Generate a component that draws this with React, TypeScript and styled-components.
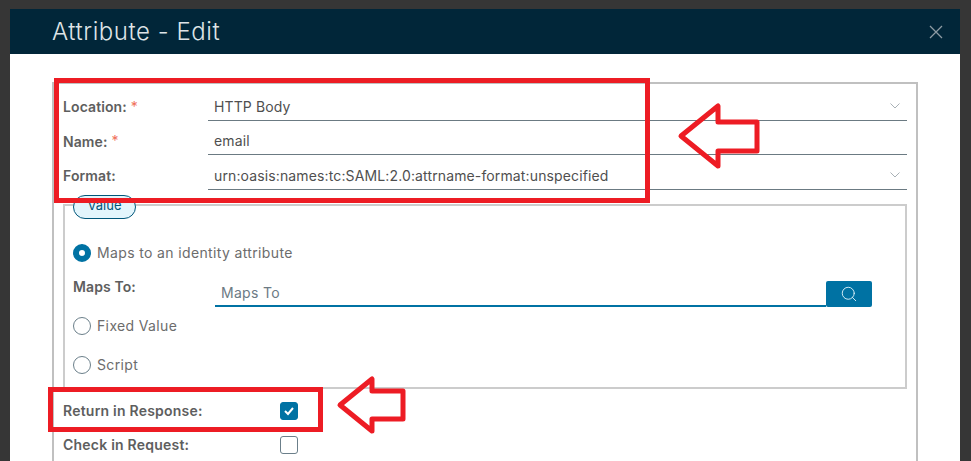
import { Search } from "lucide-react";
import styled, { createGlobalStyle } from "styled-components";

const GlobalStyle = createGlobalStyle`
  html, body {
    margin: 0;
    padding: 0;
    background: #363636;
  }
  * {
    box-sizing: border-box;
  }
`;

const Page = styled.div`
  position: relative;
  width: 971px;
  height: 461px;
  padding: 9px 11px 0 10px;
  overflow: hidden;
  background: #363636;
  font-family: "Inter", "Noto Sans", "Liberation Sans", sans-serif;
  font-size: 14px;
  color: #565656;
`;

const Modal = styled.div`
  height: 452px;
  background: #fff;
`;

const Header = styled.div`
  display: flex;
  align-items: center;
  justify-content: space-between;
  height: 45px;
  padding: 0 17px 0 42px;
  background: #012639;
`;

const Title = styled.div`
  font-size: 24px;
  font-weight: 300;
  letter-spacing: 0.55px;
  color: #dfe4e7;
`;

const Body = styled.div`
  padding: 28px 42px 0;
`;

const Fieldset = styled.div`
  height: 420px;
  padding: 2px 9px 0;
  border: 2px solid #c0c0c0;
`;

const Row = styled.div`
  display: flex;
  height: 34.5px;
`;

const Label = styled.div`
  display: flex;
  align-items: center;
  width: 145px;
  flex: none;
  padding-top: 7px;
  font-size: 14px;
  font-weight: 600;
  letter-spacing: 0.1px;
  color: #5e5e5e;
`;

const Required = styled.span`
  margin-left: 4px;
  margin-top: -1px;
  font-weight: 400;
  color: #f0705a;
`;

const Field = styled.div`
  display: flex;
  flex: 1;
  align-items: center;
  justify-content: space-between;
  padding: 7px 7px 0 6px;
  border-bottom: 1px solid #6b7a82;
  font-size: 14px;
  letter-spacing: 0.13px;
  color: #4f4f4f;
`;

const Chevron = styled.svg`
  width: 10px;
  height: 6px;
  fill: none;
  stroke: #a9b1b6;
  stroke-width: 1;
`;

const ValueGroup = styled.div`
  position: relative;
  height: 185px;
  margin-top: 14px;
  padding: 28px 8px 0;
  border: 2px solid #cccccc;
`;

const ValueLegend = styled.div`
  position: absolute;
  top: -11px;
  left: 8px;
  width: 63px;
  height: 24px;
  border: 1px solid #00567a;
  border-radius: 12px;
  background: #e3f5fc;
  font-size: 13px;
  line-height: 19px;
  text-align: center;
  color: #00567a;
`;

const RadioRow = styled.div<{ $height: number }>`
  display: flex;
  align-items: center;
  gap: 6px;
  height: ${(p) => p.$height}px;
  letter-spacing: 0.36px;
  color: #6c6c6c;
`;

const Radio = styled.span<{ $on?: boolean }>`
  flex: none;
  width: 18px;
  height: 18px;
  border-radius: 50%;
  border: ${(p) => (p.$on ? "6px solid #0072a3" : "1px solid #6b7f8a")};
  background: #fff;
`;

const MapsRow = styled.div`
  display: flex;
  align-items: flex-end;
  height: 26px;
  margin: 9px 0 0;
`;

const MapsLabel = styled.div`
  align-self: flex-start;
  width: 142px;
  flex: none;
  margin-top: -3px;
  font-weight: 600;
  letter-spacing: 0.1px;
  color: #5e5e5e;
`;

const MapsInput = styled.div`
  width: 611px;
  height: 25px;
  padding: 2px 6px 0;
  border-bottom: 2px solid #0072a3;
  letter-spacing: 0.3px;
  color: #6c7a84;
`;

const SearchButton = styled.div`
  display: flex;
  align-items: center;
  justify-content: center;
  width: 46px;
  height: 26px;
  border-radius: 2px;
  background: #0072a3;
  color: #e3f5fc;
`;

const CheckRow = styled.div<{ $top: number }>`
  display: flex;
  align-items: center;
  height: 18px;
  margin-top: ${(p) => p.$top}px;
`;

const CheckLabel = styled.div`
  width: 217px;
  flex: none;
  font-weight: 600;
  letter-spacing: 0.22px;
  color: #5e5e5e;
`;

const Checkbox = styled.span<{ $on?: boolean }>`
  display: flex;
  align-items: center;
  justify-content: center;
  width: 18px;
  height: 18px;
  border-radius: 3px;
  border: 1px solid ${(p) => (p.$on ? "#0072a3" : "#6b7f8a")};
  background: ${(p) => (p.$on ? "#0072a3" : "#fff")};
`;

const Highlight = styled.div<{ $x: number; $y: number; $w: number; $h: number }>`
  position: absolute;
  left: ${(p) => p.$x}px;
  top: ${(p) => p.$y}px;
  width: ${(p) => p.$w}px;
  height: ${(p) => p.$h}px;
  border: 5px solid #ed1c24;
`;

const Annotations = styled.svg`
  position: absolute;
  inset: 0;
  width: 971px;
  height: 461px;
  fill: none;
  stroke: #ed1c24;
  stroke-width: 5;
  stroke-linejoin: round;
`;

const ChevronDown = () => (
  <Chevron viewBox="0 0 10 6">
    <path d="M0.5 0.5 5 5 9.5 0.5" />
  </Chevron>
);

export default function App() {
  return (
    <Page>
      <GlobalStyle />
      <Modal>
        <Header>
          <Title>Attribute - Edit</Title>
          <svg width="14" height="14" viewBox="0 0 14 14" fill="none" stroke="#8d9ba3" strokeWidth="1.3">
            <path d="M1 1 13 13M13 1 1 13" />
          </svg>
        </Header>
        <Body>
          <Fieldset>
            <Row>
              <Label>
                Location:<Required>*</Required>
              </Label>
              <Field>
                HTTP Body
                <ChevronDown />
              </Field>
            </Row>
            <Row>
              <Label>
                Name:<Required>*</Required>
              </Label>
              <Field>email</Field>
            </Row>
            <Row>
              <Label>Format:</Label>
              <Field>
                urn:oasis:names:tc:SAML:2.0:attrname-format:unspecified
                <ChevronDown />
              </Field>
            </Row>
            <ValueGroup>
              <ValueLegend>Value</ValueLegend>
              <RadioRow $height={38}>
                <Radio $on />
                Maps to an identity attribute
              </RadioRow>
              <MapsRow>
                <MapsLabel>Maps To:</MapsLabel>
                <MapsInput>Maps To</MapsInput>
                <SearchButton>
                  <Search size={18} strokeWidth={1.2} />
                </SearchButton>
              </MapsRow>
              <RadioRow $height={38}>
                <Radio />
                Fixed Value
              </RadioRow>
              <RadioRow $height={40}>
                <Radio />
                Script
              </RadioRow>
            </ValueGroup>
            <CheckRow $top={13}>
              <CheckLabel>Return in Response:</CheckLabel>
              <Checkbox $on>
                <svg width="12" height="10" viewBox="0 0 12 10" fill="none" stroke="#fff" strokeWidth="2">
                  <path d="M2 5 5 8 10 2" />
                </svg>
              </Checkbox>
            </CheckRow>
            <CheckRow $top={16}>
              <CheckLabel>Check in Request:</CheckLabel>
              <Checkbox />
            </CheckRow>
          </Fieldset>
        </Body>
      </Modal>
      <Highlight $x={54} $y={78} $w={596} $h={125} />
      <Highlight $x={48} $y={387} $w={275} $h={45} />
      <Annotations viewBox="0 0 971 461">
        <path d="M681 136 718 106V122H757V151H718V166Z" />
        <path d="M340 405 372 379V391H403V419H372V431Z" />
      </Annotations>
    </Page>
  );
}
